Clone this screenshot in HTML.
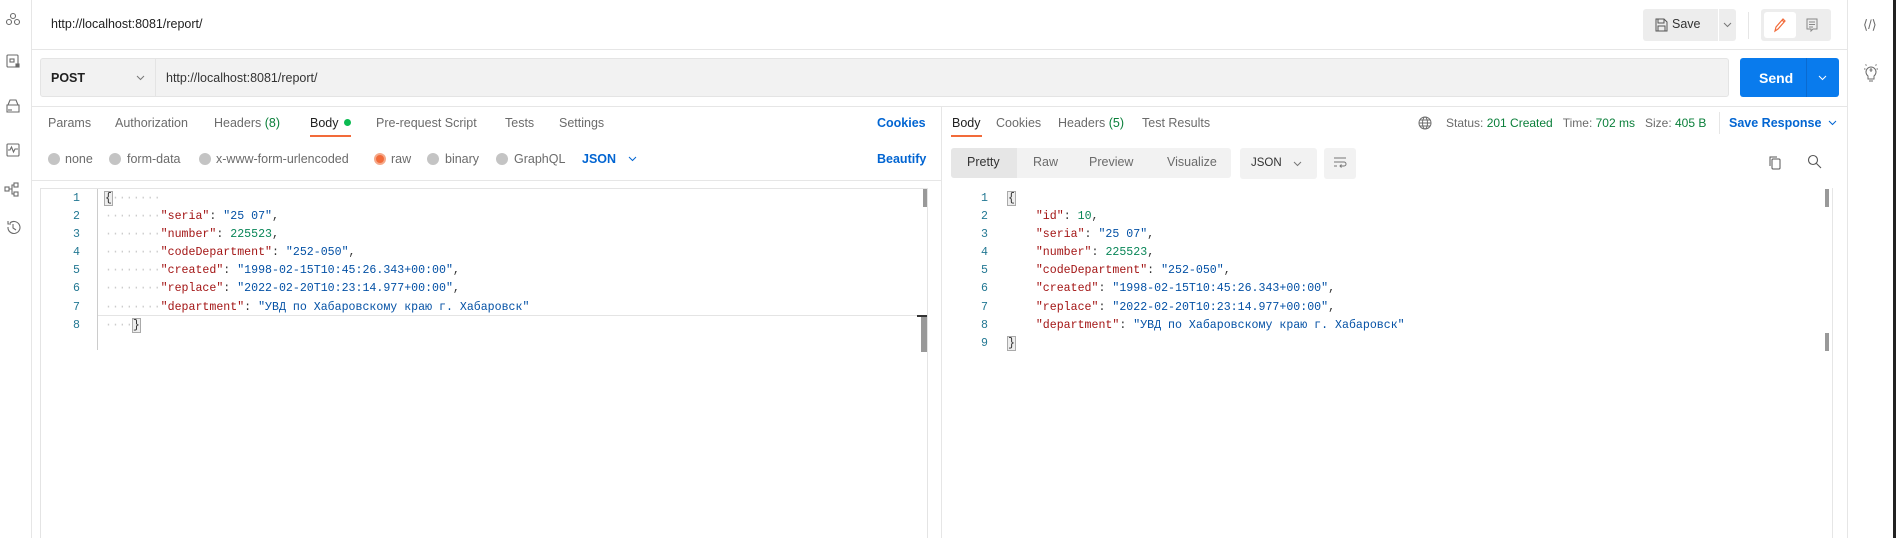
<!DOCTYPE html>
<html><head><meta charset="utf-8"><style>
*{box-sizing:border-box;margin:0;padding:0}
body{width:1896px;height:538px;overflow:hidden;background:#fff;font-family:"Liberation Sans",sans-serif;font-size:12.5px;color:#212121;position:relative}
.a{position:absolute;white-space:nowrap}
.g{color:#6b6b6b}
.bl{color:#0265d2}
.gr{color:#0a7f3a}
.ln{background:#e6e6e6}
.code{font-family:"Liberation Mono","Noto Sans CJK SC",monospace;font-size:11.6px}
.k{color:#a31515}.s{color:#0451a5}.n{color:#098658}.num{color:#237893}
.rad{width:12px;height:12px;border-radius:50%;background:#c4c4c4;position:absolute}
svg{position:absolute}
</style></head><body>
<!-- left sidebar -->
<div class="a ln" style="left:31px;top:0;width:1px;height:538px"></div>
<svg style="left:4px;top:12px" width="18" height="225" fill="none" stroke="#6b6b6b" stroke-width="1.1">
<circle cx="9" cy="4" r="2.5"/><circle cx="5" cy="10" r="2.5"/><circle cx="13" cy="10" r="2.5"/>
<rect x="3" y="43" width="11" height="12" rx="1"/><rect x="6" y="47" width="4" height="3"/><rect x="12" y="52" width="3" height="3" fill="#6b6b6b"/>
<path d="M3 93h12v7H3zM4 93l2-5h6l2 5M5 97v2M7 97v2"/>
<rect x="3" y="132" width="12" height="12" rx="1"/><path d="M4 138h2l1.5-3 2 5 1.5-3h3"/>
<rect x="1" y="175" width="4" height="4"/><rect x="10" y="171" width="4" height="4"/><rect x="10" y="180" width="4" height="4"/><path d="M5 177h3v-4h2M8 177v5h2"/>
<path d="M4 215a6 6 0 1 0 2-4M4 209v3h3M9 212v4l3 2"/>
</svg>
<!-- top bar -->
<div class="a" style="left:51px;top:17px;font-size:12.5px;color:#212121">http://localhost:8081/report/</div>
<div class="a ln" style="left:32px;top:49px;width:1815px;height:1px"></div>
<div class="a" style="left:1643px;top:9px;width:93px;height:32px;background:#ededed;border-radius:3px"></div>
<div class="a" style="left:1718px;top:9px;width:1px;height:32px;background:#fff"></div>
<svg style="left:1655px;top:18px" width="13" height="14" fill="none" stroke="#555"><path d="M1 1h8l3 3v9H1zM3 1v4h6V1M3 13V8h7v5"/></svg>
<div class="a" style="left:1672px;top:17px;color:#333">Save</div>
<svg style="left:1723px;top:22px" width="9" height="6" fill="none" stroke="#777"><path d="M1 1l3.5 3.5L8 1"/></svg>
<div class="a ln" style="left:1748px;top:12px;width:1px;height:27px"></div>
<div class="a" style="left:1761px;top:9px;width:70px;height:32px;background:#ededed;border-radius:3px"></div>
<div class="a" style="left:1764px;top:12px;width:32px;height:26px;background:#fff;border-radius:3px"></div>
<svg style="left:1773px;top:17px" width="14" height="16" fill="none" stroke="#f26b3a" stroke-width="1.2"><path d="M2 14l1-4 7-8 2 2-7 8zM9 3l2 2"/></svg>
<svg style="left:1806px;top:18px" width="13" height="14" fill="none" stroke="#888"><path d="M1 1h10v10H7l-2 2v-2H1zM3 4h6M3 6.5h6M3 9h4"/></svg>
<!-- right sidebar -->
<div class="a ln" style="left:1847px;top:0;width:1px;height:538px"></div>
<div class="a" style="left:1893px;top:0;width:3px;height:538px;background:#222"></div>
<div class="a g" style="left:1863px;top:17px;font-size:13px">&lang;/&rang;</div>
<svg style="left:1864px;top:64px" width="14" height="18" fill="none" stroke="#6b6b6b"><path d="M4 12a5 5 0 1 1 6 0v3H4zM5 17h4M7 4v4M5.5 6h3M0 5h1.5M12.5 5H14M1.5 0.5l1 1M12.5 0.5l-1 1"/></svg>
<!-- url row -->
<div class="a" style="left:40px;top:58px;width:1689px;height:39px;background:#f2f2f2;border:1px solid #e4e4e4;border-radius:3px"></div>
<div class="a" style="left:155px;top:59px;width:1px;height:37px;background:#e4e4e4"></div>
<div class="a" style="left:51px;top:71px;font-weight:bold;color:#212121">POST</div>
<svg style="left:136px;top:75px" width="9" height="6" fill="none" stroke="#777"><path d="M1 1l3.5 3.5L8 1"/></svg>
<div class="a" style="left:166px;top:71px;color:#333">http://localhost:8081/report/</div>
<div class="a" style="left:1740px;top:58px;width:99px;height:39px;background:#097bed;border-radius:3px"></div>
<div class="a" style="left:1806px;top:58px;width:1px;height:39px;background:#0a6ad0"></div>
<div class="a" style="left:1759px;top:70px;color:#fff;font-weight:bold;font-size:14px">Send</div>
<svg style="left:1818px;top:75px" width="9" height="6" fill="none" stroke="#fff"><path d="M1 1l3.5 3.5L8 1"/></svg>
<div class="a ln" style="left:32px;top:106px;width:1815px;height:1px"></div>
<div class="a ln" style="left:941px;top:107px;width:1px;height:431px"></div>
<!-- left tabs -->
<div class="a g" style="left:48px;top:116px">Params</div>
<div class="a g" style="left:115px;top:116px">Authorization</div>
<div class="a g" style="left:214px;top:116px">Headers <span class="gr">(8)</span></div>
<div class="a" style="left:310px;top:116px;color:#212121">Body</div>
<div class="a" style="left:344px;top:119px;width:7px;height:7px;border-radius:50%;background:#0cbb52"></div>
<div class="a" style="left:310px;top:135px;width:41px;height:2px;background:#f26b3a"></div>
<div class="a g" style="left:376px;top:116px">Pre-request Script</div>
<div class="a g" style="left:505px;top:116px">Tests</div>
<div class="a g" style="left:559px;top:116px">Settings</div>
<div class="a bl" style="left:877px;top:116px;font-weight:bold">Cookies</div>
<div class="rad" style="left:48px;top:153px"></div><div class="a g" style="left:65px;top:152px">none</div>
<div class="rad" style="left:109px;top:153px"></div><div class="a g" style="left:127px;top:152px">form-data</div>
<div class="rad" style="left:199px;top:153px"></div><div class="a g" style="left:216px;top:152px">x-www-form-urlencoded</div>
<div class="rad" style="left:374px;top:153px;background:#f26b3a;border:2px solid #f5a98a"></div><div class="a g" style="left:391px;top:152px">raw</div>
<div class="rad" style="left:427px;top:153px"></div><div class="a g" style="left:445px;top:152px">binary</div>
<div class="rad" style="left:496px;top:153px"></div><div class="a g" style="left:514px;top:152px">GraphQL</div>
<div class="a bl" style="left:582px;top:152px;font-weight:bold">JSON</div>
<svg style="left:628px;top:156px" width="9" height="6" fill="none" stroke="#0265d2"><path d="M1 1l3.5 3.5L8 1"/></svg>
<div class="a bl" style="left:877px;top:152px;font-weight:bold">Beautify</div>
<div class="a ln" style="left:32px;top:180px;width:909px;height:1px"></div>
<!-- left editor -->
<div class="a" style="left:40px;top:188px;width:888px;height:350px;border:1px solid #e4e4e4;border-bottom:none"></div>
<div class="a" style="left:97px;top:189px;width:1px;height:161px;background:#ccc"></div>
<div class="a" style="left:98px;top:315px;width:830px;height:1px;background:#e4e4e4"></div>
<div class="a" style="left:923px;top:189px;width:4px;height:18px;background:#999"></div>
<div class="a" style="left:921px;top:315px;width:6px;height:37px;background:#999"></div>
<div class="a" style="left:917px;top:315px;width:10px;height:2px;background:#333"></div>
<div class="code">
<div class="a num" style="left:70px;top:190px;line-height:18.1px;text-align:right;width:10px">1<br>2<br>3<br>4<br>5<br>6<br>7<br>8</div>
<div class="a" style="left:105px;top:190px;line-height:18.1px;color:#333"><span style="background:#eee;outline:1px solid #aaa">{</span><span style="color:#ccc">·······</span><br><span style="color:#ccc">········</span><span class="k">"seria"</span>: <span class="s">"25 07"</span>,<br><span style="color:#ccc">········</span><span class="k">"number"</span>: <span class="n">225523</span>,<br><span style="color:#ccc">········</span><span class="k">"codeDepartment"</span>: <span class="s">"252-050"</span>,<br><span style="color:#ccc">········</span><span class="k">"created"</span>: <span class="s">"1998-02-15T10:45:26.343+00:00"</span>,<br><span style="color:#ccc">········</span><span class="k">"replace"</span>: <span class="s">"2022-02-20T10:23:14.977+00:00"</span>,<br><span style="color:#ccc">········</span><span class="k">"department"</span>: <span class="s">"УВД по Хабаровскому краю г. Хабаровск"</span><br><span style="color:#ccc">····</span><span style="background:#eee;outline:1px solid #aaa">}</span></div>
</div>
<!-- right tabs -->
<div class="a" style="left:952px;top:116px">Body</div>
<div class="a" style="left:951px;top:135px;width:31px;height:2px;background:#f26b3a"></div>
<div class="a g" style="left:996px;top:116px">Cookies</div>
<div class="a g" style="left:1058px;top:116px">Headers <span class="gr">(5)</span></div>
<div class="a g" style="left:1142px;top:116px">Test Results</div>
<svg style="left:1418px;top:116px" width="14" height="14" fill="none" stroke="#6b6b6b"><circle cx="7" cy="7" r="6"/><ellipse cx="7" cy="7" rx="2.5" ry="6"/><path d="M1 7h12M2 4h10M2 10h10"/></svg>
<div class="a g" style="left:1446px;top:116px;font-size:12px">Status: <span class="gr">201 Created</span>&nbsp;&nbsp;&nbsp;Time: <span class="gr">702 ms</span>&nbsp;&nbsp;&nbsp;Size: <span class="gr">405 B</span></div>
<div class="a ln" style="left:1719px;top:112px;width:1px;height:22px"></div>
<div class="a bl" style="left:1729px;top:116px;font-weight:bold">Save Response</div>
<svg style="left:1828px;top:120px" width="9" height="6" fill="none" stroke="#0265d2"><path d="M1 1l3.5 3.5L8 1"/></svg>
<div class="a" style="left:951px;top:148px;width:280px;height:30px;background:#f2f2f2;border-radius:3px"></div>
<div class="a" style="left:951px;top:148px;width:66px;height:30px;background:#e6e6e6;border-radius:3px 0 0 3px"></div>
<div class="a" style="left:967px;top:155px;color:#333">Pretty</div>
<div class="a g" style="left:1033px;top:155px">Raw</div>
<div class="a g" style="left:1089px;top:155px">Preview</div>
<div class="a g" style="left:1167px;top:155px">Visualize</div>
<div class="a" style="left:1240px;top:148px;width:77px;height:31px;background:#f2f2f2;border-radius:3px"></div>
<div class="a" style="left:1251px;top:157px;font-size:11.5px;color:#333">JSON</div>
<svg style="left:1293px;top:161px" width="9" height="6" fill="none" stroke="#777"><path d="M1 1l3.5 3.5L8 1"/></svg>
<div class="a" style="left:1324px;top:148px;width:32px;height:31px;background:#f2f2f2;border-radius:3px"></div>
<svg style="left:1333px;top:156px" width="14" height="14" fill="none" stroke="#777"><path d="M1 2h12M1 6h10a2 2 0 0 1 0 4H7M8.5 8.5L7 10l1.5 1.5M1 10h3"/></svg>
<svg style="left:1768px;top:155px" width="14" height="15" fill="none" stroke="#555"><rect x="4" y="4" width="8" height="10" rx="1"/><path d="M2 11V2h7"/></svg>
<svg style="left:1807px;top:154px" width="15" height="15" fill="none" stroke="#555" stroke-width="1.1"><circle cx="6" cy="6" r="4.5"/><path d="M9.5 9.5L14 14"/></svg>
<!-- right editor -->
<div class="a" style="left:1825px;top:189px;width:4px;height:18px;background:#999"></div>
<div class="a" style="left:1825px;top:333px;width:4px;height:18px;background:#999"></div>
<div class="a ln" style="left:1832px;top:188px;width:1px;height:350px"></div>
<div class="code">
<div class="a num" style="left:978px;top:190px;line-height:18.1px;text-align:right;width:10px">1<br>2<br>3<br>4<br>5<br>6<br>7<br>8<br>9</div>
<div class="a" style="left:1008px;top:190px;line-height:18.1px;color:#333"><span style="background:#eee;outline:1px solid #aaa">{</span><br>&nbsp;&nbsp;&nbsp;&nbsp;<span class="k">"id"</span>: <span class="n">10</span>,<br>&nbsp;&nbsp;&nbsp;&nbsp;<span class="k">"seria"</span>: <span class="s">"25 07"</span>,<br>&nbsp;&nbsp;&nbsp;&nbsp;<span class="k">"number"</span>: <span class="n">225523</span>,<br>&nbsp;&nbsp;&nbsp;&nbsp;<span class="k">"codeDepartment"</span>: <span class="s">"252-050"</span>,<br>&nbsp;&nbsp;&nbsp;&nbsp;<span class="k">"created"</span>: <span class="s">"1998-02-15T10:45:26.343+00:00"</span>,<br>&nbsp;&nbsp;&nbsp;&nbsp;<span class="k">"replace"</span>: <span class="s">"2022-02-20T10:23:14.977+00:00"</span>,<br>&nbsp;&nbsp;&nbsp;&nbsp;<span class="k">"department"</span>: <span class="s">"УВД по Хабаровскому краю г. Хабаровск"</span><br><span style="background:#eee;outline:1px solid #aaa">}</span></div>
</div>
</body></html>
